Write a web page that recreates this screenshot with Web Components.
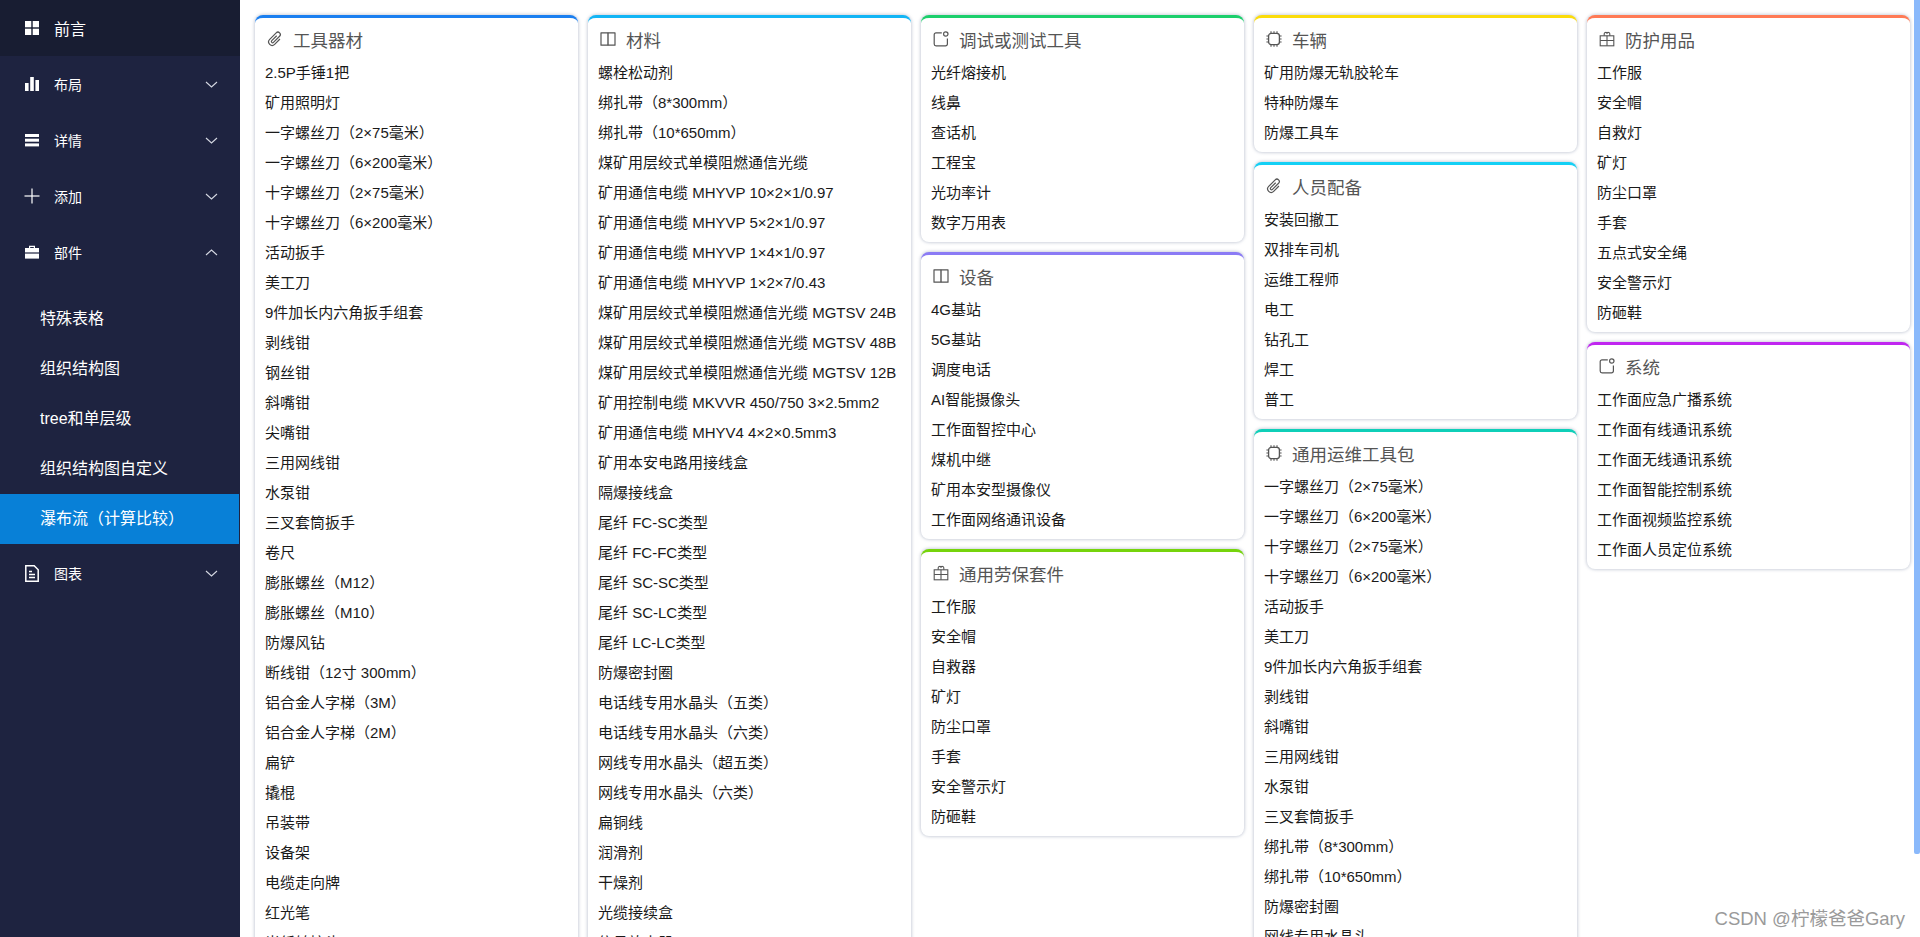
<!DOCTYPE html>
<html lang="zh">
<head>
<meta charset="utf-8">
<title>瀑布流</title>
<style>
html,body{margin:0;height:100%;overflow:hidden;background:#fff;}
body{font-family:"Liberation Sans","Noto Sans CJK SC",sans-serif;}
</style>
</head>
<body>
<app-shell></app-shell>
<script>
const FONT='"Liberation Sans","Noto Sans CJK SC",sans-serif';

const ICONS={
    grid:'<svg viewBox="0 0 14 14" fill="#fff"><rect x="0" y="0" width="6.3" height="6.3"/><rect x="7.7" y="0" width="6.3" height="6.3"/><rect x="0" y="7.7" width="6.3" height="6.3"/><rect x="7.7" y="7.7" width="6.3" height="6.3"/></svg>',
    bars:'<svg viewBox="0 0 14 14" fill="#fff"><rect x="0" y="6" width="3.6" height="8"/><rect x="5.2" y="0" width="3.6" height="14"/><rect x="10.4" y="3" width="3.6" height="11"/></svg>',
    lines:'<svg viewBox="0 0 14 14" fill="#fff"><rect x="0" y="1" width="14" height="3"/><rect x="0" y="5.7" width="14" height="3"/><rect x="0" y="10.4" width="14" height="3"/></svg>',
    plus:'<svg viewBox="0 0 14 14" fill="#fff"><rect x="-0.5" y="6.4" width="15" height="1.2"/><rect x="6.4" y="-0.5" width="1.2" height="15"/></svg>',
    bag:'<svg viewBox="0 0 14 14" fill="#fff"><path d="M4 3V.8h6V3H8.8V2H5.2v1z"/><rect x="0" y="3" width="14" height="4.4"/><rect x="0" y="8.6" width="14" height="5"/></svg>',
    doc:'<svg viewBox="0 0 14 17" style="height:17px" fill="none" stroke="#fff" stroke-width="1.5"><path d="M.8 .8h8.400l4 4v11.400H.8z"/><path d="M4 6.500h3M4 9.500h6M4 12.500h6"/></svg>',
    clip:'<svg viewBox="0 0 16 16" fill="none" stroke="#555" stroke-width="1.200"><g transform="rotate(45 8 8)"><path d="M11.500 4.500v7.500a3.500 3.500 0 0 1-7 0V2.800a2.400 2.400 0 0 1 4.800 0v8.700a1.200 1.200 0 0 1-2.400 0V4.500"/></g></svg>',
    book:'<svg viewBox="0 0 16 16" fill="none" stroke="#555" stroke-width="1.200"><path d="M1 1.800h14v12.400H1z" stroke-linejoin="round"/><path d="M8 1.800v12.400" stroke-width="1.400"/></svg>',
    help:'<svg viewBox="0 0 16 16" fill="none" stroke="#555" stroke-width="1.200"><path d="M8.800 1.800H3a1.800 1.800 0 0 0-1.800 1.800v9.400A1.800 1.800 0 0 0 3 14.800h9.600a1.800 1.800 0 0 0 1.800-1.800V7.500"/><circle cx="12.800" cy="3" r="2.200"/></svg>',
    chip:'<svg viewBox="0 0 16 16" fill="none" stroke="#555"><rect x="2.600" y="2.400" width="10.800" height="11.200" rx="2.600" stroke-width="1.300"/><path d="M5 .3v2M8 .3v2M11 .3v2M5 13.700v2M8 13.700v2M11 13.700v2M.4 5h2M.4 8h2M.4 11h2M13.600 5h2M13.600 8h2M13.600 11h2" stroke-width="1.100"/></svg>',
    gift:'<svg viewBox="0 0 16 16" fill="none" stroke="#555" stroke-width="1.100"><rect x="1.200" y="4.800" width="13.600" height="10"/><path d="M1.200 9.500h13.600M8 4.800v10M5.200 4.800V2.800a1.500 1.500 0 0 1 2.800-.6 1.500 1.500 0 0 1 2.800 .6v2"/></svg>'
};

class SideItem extends HTMLElement{
    constructor(){
        super();
        const root=this.attachShadow({mode:'open'});
        const arrow=this.getAttribute('arrow');
        let chevron='';
        if(arrow){
            const d=arrow==='up'?'M1 7 L6.500 2 L12 7':'M1 2 L6.500 7 L12 2';
            chevron=`<svg class="arrow" viewBox="0 0 13 9" fill="none" stroke="#d5d8e2" stroke-width="1.100"><path d="${d}"/></svg>`;
        }
        root.innerHTML=`<style>
        :host{display:flex;align-items:center;height:56px;padding-left:25px;color:#fff;font-size:14px;}
        :host([first]){background:#181d32;font-size:16px;}
        .ico{width:14px;height:14px;display:flex;align-items:center;margin-right:15px;}
        .ico svg{width:14px;height:14px;flex:none;overflow:visible;}
        .txt{flex:1;}
        .arrow{width:13px;height:9px;margin-right:22px;}
        </style>
        <span class="ico">${ICONS[this.getAttribute('icon')]}</span>
        <span class="txt"><slot></slot></span>${chevron}`;
    }
}

class SideSub extends HTMLElement{
    constructor(){
        super();
        this.attachShadow({mode:'open'}).innerHTML=`<style>
        :host{display:flex;align-items:center;box-sizing:border-box;height:50px;padding:0 0 4px 40px;color:#fff;font-size:16px;}
        :host([active]){background:#0880d7;margin-right:1px;}
        </style><slot></slot>`;
    }
}

class SideBar extends HTMLElement{
    constructor(){
        super();
        this.attachShadow({mode:'open'}).innerHTML=`<style>
        :host{display:block;width:240px;height:100%;flex:none;background:#1e2340;overflow:hidden;}
        .sub{padding-top:14px;padding-bottom:1px;}
        </style>
        <side-item first icon="grid">前言</side-item>
        <side-item icon="bars" arrow="down">布局</side-item>
        <side-item icon="lines" arrow="down">详情</side-item>
        <side-item icon="plus" arrow="down">添加</side-item>
        <side-item icon="bag" arrow="up">部件</side-item>
        <div class="sub">
            <side-sub>特殊表格</side-sub>
            <side-sub>组织结构图</side-sub>
            <side-sub>tree和单层级</side-sub>
            <side-sub>组织结构图自定义</side-sub>
            <side-sub active>瀑布流（计算比较）</side-sub>
        </div>
        <side-item icon="doc" arrow="down">图表</side-item>`;
    }
}

class ListCard extends HTMLElement{
    constructor(){
        super();
        const root=this.attachShadow({mode:'open'});
        const items=this.getAttribute('items').split('|');
        root.innerHTML=`<style>
        :host{display:block;background:#fff;border-top:3px solid ${this.getAttribute('color')};border-radius:8px;
            box-shadow:0 0 3px 1px rgba(140,150,175,.42);padding-bottom:4px;}
        .head{display:flex;align-items:center;box-sizing:border-box;height:40px;padding:2px 0 0 12px;color:#555;font-size:17.500px;}
        .head svg{width:16px;height:16px;margin-right:10px;flex:none;overflow:visible;}
        .row{height:30px;line-height:30px;padding-left:10px;color:#1a1a1a;font-size:15px;white-space:nowrap;}
        </style>
        <div class="head">${ICONS[this.getAttribute('icon')]}<span>${this.getAttribute('title')}</span></div>
        ${items.map(t=>`<div class="row">${t}</div>`).join('')}`;
    }
}

class WaterFall extends HTMLElement{
    constructor(){
        super();
        this.attachShadow({mode:'open'}).innerHTML=`<style>
        :host{display:block;flex:1;height:100%;overflow:hidden;}
        .cols{display:grid;grid-template-columns:repeat(5,323px);column-gap:10px;padding:15px 0 0 15px;align-items:start;}
        .col{display:flex;flex-direction:column;gap:10px;}
        </style>
        <div class="cols">
            <div class="col"><slot name="c1"></slot></div>
            <div class="col"><slot name="c2"></slot></div>
            <div class="col"><slot name="c3"></slot></div>
            <div class="col"><slot name="c4"></slot></div>
            <div class="col"><slot name="c5"></slot></div>
        </div>`;
    }
}

class AppShell extends HTMLElement{
    constructor(){
        super();
        const root=this.attachShadow({mode:'open'});
        const tools='一字螺丝刀（2×75毫米）|一字螺丝刀（6×200毫米）|十字螺丝刀（2×75毫米）|十字螺丝刀（6×200毫米）|活动扳手|美工刀|9件加长内六角扳手组套|剥线钳';
        const cards=[
            ['c1','#1a7ff0','clip','工具器材','2.5P手锤1把|矿用照明灯|'+tools+'|钢丝钳|斜嘴钳|尖嘴钳|三用网线钳|水泵钳|三叉套筒扳手|卷尺|膨胀螺丝（M12）|膨胀螺丝（M10）|防爆风钻|断线钳（12寸 300mm）|铝合金人字梯（3M）|铝合金人字梯（2M）|扁铲|撬棍|吊装带|设备架|电缆走向牌|红光笔|光纤转接头'],
            ['c2','#12b5f5','book','材料','螺栓松动剂|绑扎带（8*300mm）|绑扎带（10*650mm）|煤矿用层绞式单模阻燃通信光缆|矿用通信电缆 MHYVP 10×2×1/0.97|矿用通信电缆 MHYVP 5×2×1/0.97|矿用通信电缆 MHYVP 1×4×1/0.97|矿用通信电缆 MHYVP 1×2×7/0.43|煤矿用层绞式单模阻燃通信光缆 MGTSV 24B|煤矿用层绞式单模阻燃通信光缆 MGTSV 48B|煤矿用层绞式单模阻燃通信光缆 MGTSV 12B|矿用控制电缆 MKVVR 450/750 3×2.5mm2|矿用通信电缆 MHYV4 4×2×0.5mm3|矿用本安电路用接线盒|隔爆接线盒|尾纤 FC-SC类型|尾纤 FC-FC类型|尾纤 SC-SC类型|尾纤 SC-LC类型|尾纤 LC-LC类型|防爆密封圈|电话线专用水晶头（五类）|电话线专用水晶头（六类）|网线专用水晶头（超五类）|网线专用水晶头（六类）|扁铜线|润滑剂|干燥剂|光缆接续盒|信号放大器'],
            ['c3','#1ccf6c','help','调试或测试工具','光纤熔接机|线鼻|查话机|工程宝|光功率计|数字万用表'],
            ['c3','#8b7bf5','book','设备','4G基站|5G基站|调度电话|AI智能摄像头|工作面智控中心|煤机中继|矿用本安型摄像仪|工作面网络通讯设备'],
            ['c3','#76d40c','gift','通用劳保套件','工作服|安全帽|自救器|矿灯|防尘口罩|手套|安全警示灯|防砸鞋'],
            ['c4','#fbdc0a','chip','车辆','矿用防爆无轨胶轮车|特种防爆车|防爆工具车'],
            ['c4','#14d0f5','clip','人员配备','安装回撤工|双排车司机|运维工程师|电工|钻孔工|焊工|普工'],
            ['c4','#0fcfb8','chip','通用运维工具包',tools+'|斜嘴钳|三用网线钳|水泵钳|三叉套筒扳手|绑扎带（8*300mm）|绑扎带（10*650mm）|防爆密封圈|网线专用水晶头'],
            ['c5','#ff7a55','gift','防护用品','工作服|安全帽|自救灯|矿灯|防尘口罩|手套|五点式安全绳|安全警示灯|防砸鞋'],
            ['c5','#c026f0','help','系统','工作面应急广播系统|工作面有线通讯系统|工作面无线通讯系统|工作面智能控制系统|工作面视频监控系统|工作面人员定位系统']
        ];
        root.innerHTML=`<style>
        :host{display:flex;height:100vh;width:100vw;font-family:${FONT};position:relative;overflow:hidden;}
        .mark{position:absolute;right:15px;bottom:7px;color:#9a9a9a;font-size:18.500px;line-height:22px;white-space:nowrap;}
        .thumb{position:absolute;top:0;right:0;width:6px;height:854px;background:#8ab9fb;border-radius:0 0 2px 2px;}
        </style>
        <side-bar></side-bar>
        <water-fall>
        ${cards.map(c=>`<list-card slot="${c[0]}" color="${c[1]}" icon="${c[2]}" title="${c[3]}" items="${c[4]}"></list-card>`).join('')}
        </water-fall>
        <div class="thumb"></div>
        <div class="mark">CSDN @柠檬爸爸Gary</div>`;
    }
}

customElements.define('side-item',SideItem);
customElements.define('side-sub',SideSub);
customElements.define('side-bar',SideBar);
customElements.define('list-card',ListCard);
customElements.define('water-fall',WaterFall);
customElements.define('app-shell',AppShell);
</script>
</body>
</html>
